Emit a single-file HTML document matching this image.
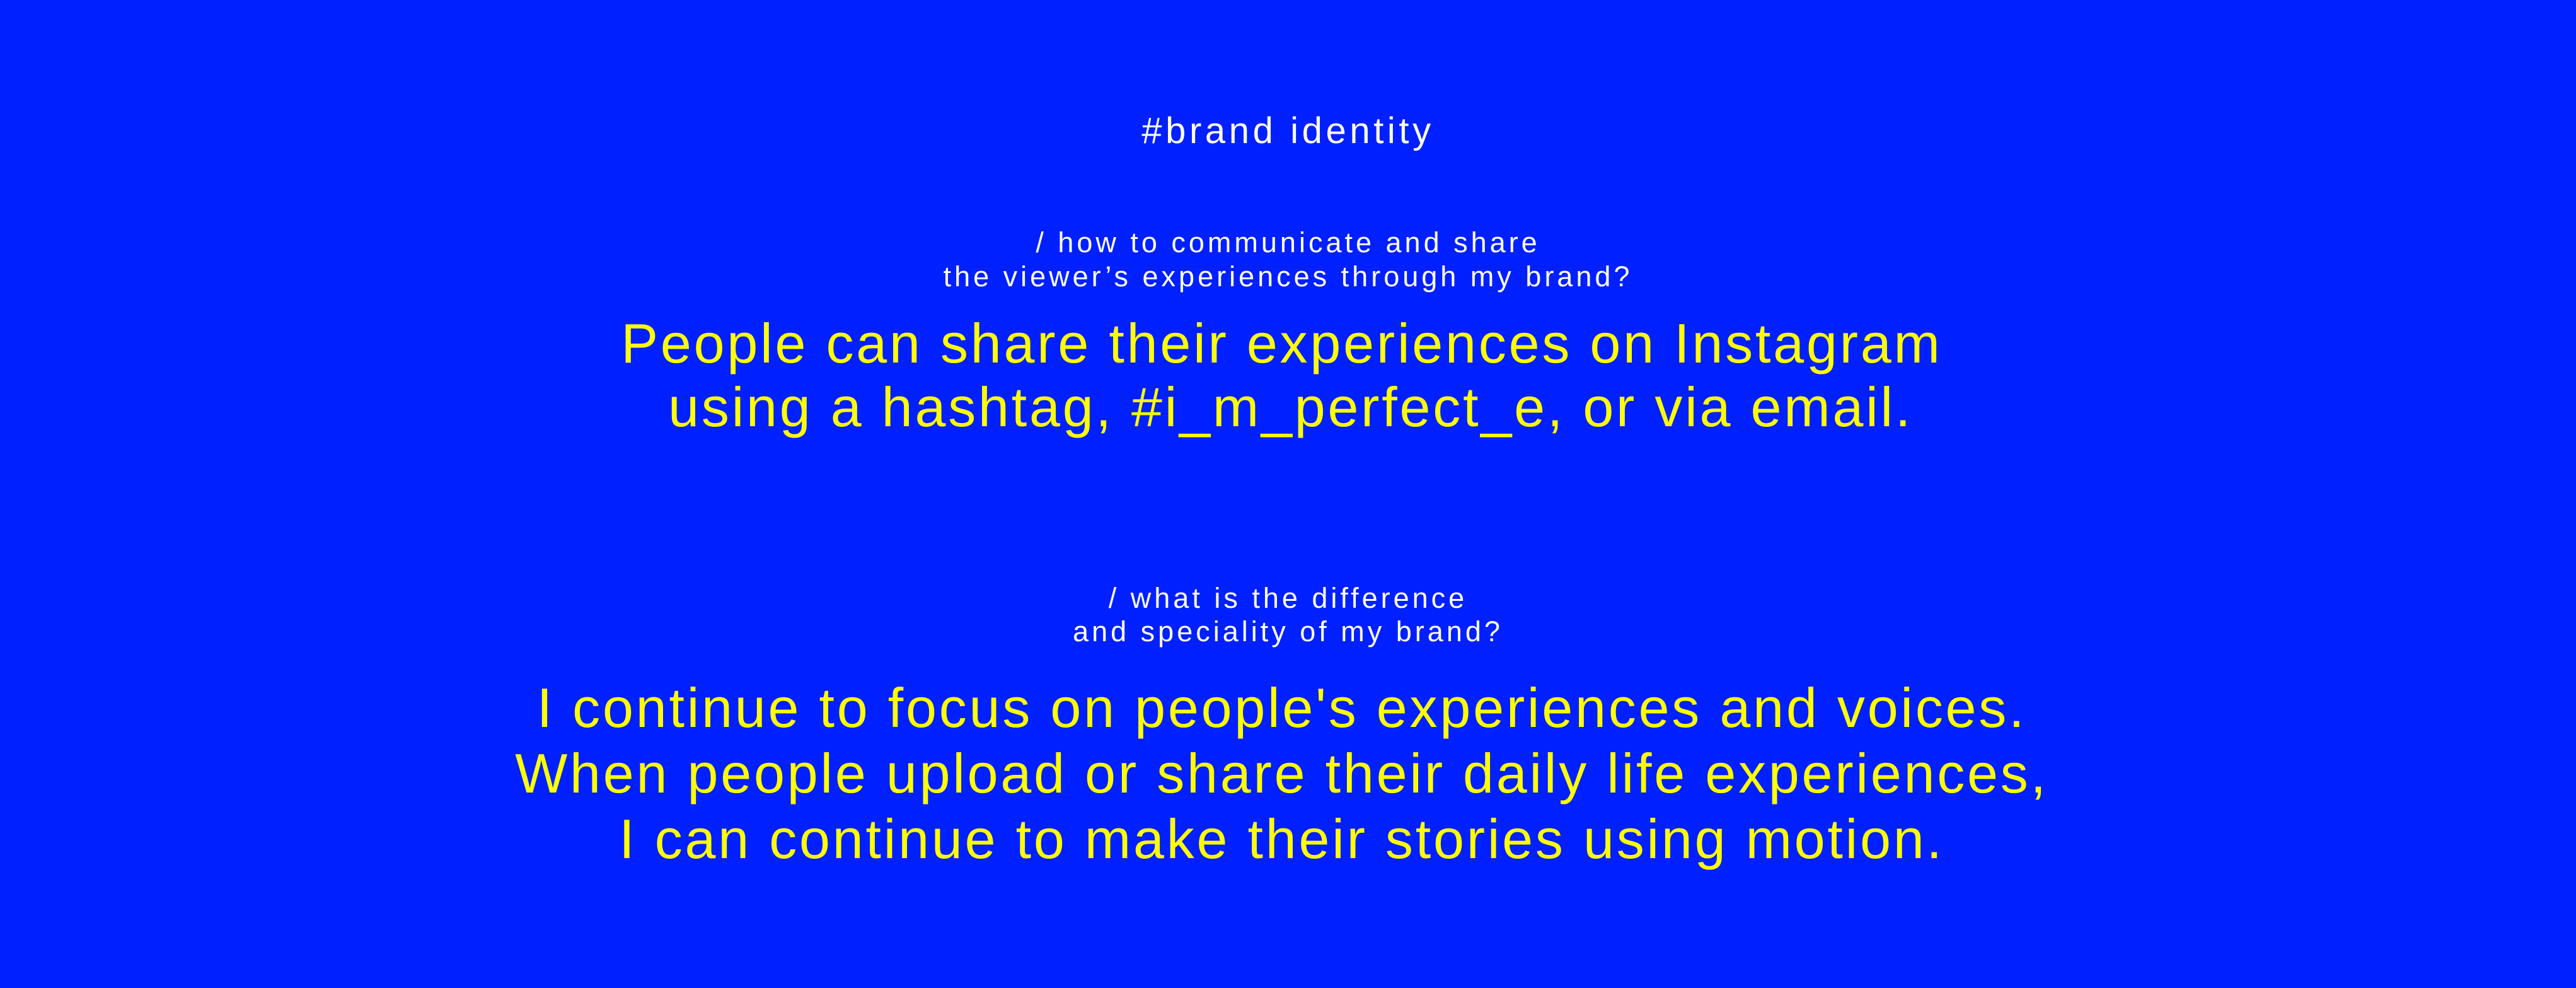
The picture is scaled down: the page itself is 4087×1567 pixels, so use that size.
<!DOCTYPE html>
<html><head><meta charset="utf-8"><style>
html,body{margin:0;padding:0}
body{width:4087px;height:1567px;background:#0020ff;position:relative;overflow:hidden;font-family:"Liberation Sans",sans-serif}
.b{position:absolute;left:0;width:4087px;text-align:center;white-space:nowrap}
.w{color:#fff}
.y{color:#ffff00;letter-spacing:3.8px;left:-10px}
</style></head><body>
<div class="b w" style="top:176px;font-size:58px;line-height:64px;letter-spacing:5.6px">#brand identity</div>
<div class="b w" style="top:358px;font-size:45px;line-height:54px;letter-spacing:5px">/ how to communicate and share<br>the viewer’s experiences through my brand?</div>
<div class="b y" style="top:494px;font-size:88px;line-height:101px">People can share their experiences on Instagram<br>&nbsp;using a hashtag, #i_m_perfect_e, or via email.</div>
<div class="b w" style="top:922px;font-size:45px;line-height:53px;letter-spacing:5px">/ what is the difference<br>and speciality of my brand?</div>
<div class="b y" style="top:1071px;font-size:88px;line-height:104px">I continue to focus on people's experiences and voices.<br>When people upload or share their daily life experiences,<br>I can continue to make their stories using motion.</div>
</body></html>
